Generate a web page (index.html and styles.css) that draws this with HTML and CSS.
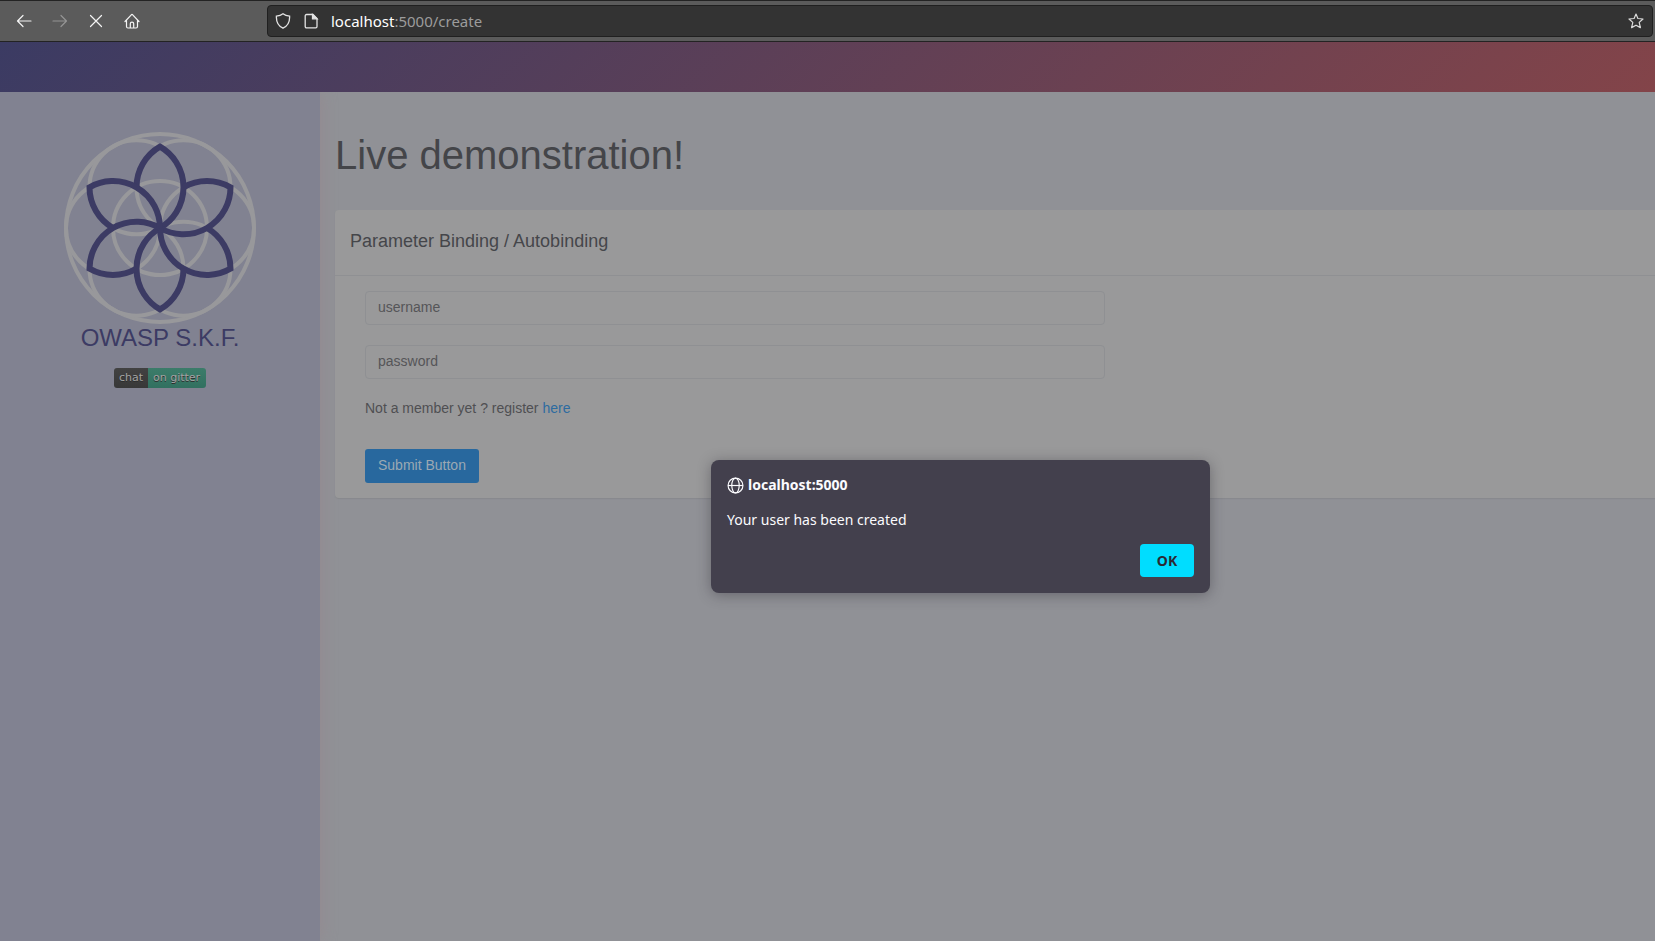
FILE: index.html
```
<!DOCTYPE html>
<html lang="en">
<head>
<meta charset="utf-8">
<title>OWASP S.K.F. - Live demonstration</title>
<link rel="stylesheet" href="styles.css">
</head>
<body>
<nav class="toolbar" aria-label="Browser">
  <div class="nav-buttons">
    <button class="tool" type="button" aria-label="Back"><svg viewBox="0 0 16 16"><path d="M15 8H1.500M7 2.500 1.500 8 7 13.500"/></svg></button>
    <button class="tool tool-off" type="button" aria-label="Forward" disabled><svg viewBox="0 0 16 16"><path d="M1 8h13.500M9 2.500 14.500 8 9 13.500"/></svg></button>
    <button class="tool" type="button" aria-label="Stop"><svg viewBox="0 0 16 16"><path d="M2.500 2.500l11 11M13.500 2.500l-11 11"/></svg></button>
    <button class="tool" type="button" aria-label="Home"><svg viewBox="0 0 16 16"><path d="M1 8.500 7.300 1.800a1 1 0 0 1 1.400 0L15 8.500M2.500 7.500v6a1.500 1.500 0 0 0 1.500 1.500h8a1.500 1.500 0 0 0 1.500-1.500v-6M6.300 15v-4.200a1.700 1.700 0 0 1 3.400 0V15"/></svg></button>
  </div>
  <div class="address">
    <svg class="icon" viewBox="0 0 16 16"><path d="M8 .8c2 1.500 4.200 2.100 6.600 2.400.3 5.600-1.800 9.700-6.600 12C3.200 12.900 1.100 8.800 1.400 3.200 3.800 2.900 6 2.300 8 .8z"/></svg>
    <svg class="icon" viewBox="0 0 16 16"><path d="M3.500 1.500h6.500l4 4v8a1.300 1.300 0 0 1-1.300 1.300H3.500a1.300 1.300 0 0 1-1.300-1.300V2.800a1.300 1.300 0 0 1 1.300-1.300z"/><path class="solid" d="M9.500 1.500v4.300h4.500z"/></svg>
    <span class="url"><span class="host">localhost</span>:5000/create</span>
    <button class="tool star" type="button" aria-label="Bookmark"><svg viewBox="0 0 16 16"><path d="M8 1l1.900 4.500 5.100.500-3.800 3.400 1.200 5.200L8 12.200l-4.400 2.400 1.200-5.200L1 6l5.100-.500z"/></svg></button>
  </div>
</nav>
<header class="banner"></header>
<div class="page">
  <aside class="sidebar">
    <svg class="logo" viewBox="-97 -97 194 194" role="img" aria-label="OWASP S.K.F. logo">
      <defs><path id="petal" d="M-23.500-40.700A47 47 0 0 1 0-81.400A47 47 0 0 1 0 0"/></defs>
      <g class="rings">
        <circle r="94"/><circle r="47"/>
        <circle cx="47" r="47"/><circle cx="-47" r="47"/>
        <circle cx="23.500" cy="-40.700" r="47"/><circle cx="-23.500" cy="-40.700" r="47"/>
        <circle cx="23.500" cy="40.700" r="47"/><circle cx="-23.500" cy="40.700" r="47"/>
      </g>
      <g class="petals">
        <use href="#petal"/><use href="#petal" transform="rotate(60)"/><use href="#petal" transform="rotate(120)"/>
        <use href="#petal" transform="rotate(180)"/><use href="#petal" transform="rotate(240)"/><use href="#petal" transform="rotate(300)"/>
      </g>
    </svg>
    <div class="brand">OWASP S.K.F.</div>
    <a class="badge" href="#gitter"><span class="badge-left">chat</span><span class="badge-right">on gitter</span></a>
  </aside>
  <main class="content">
    <h1 class="title">Live demonstration!</h1>
    <section class="card">
      <h2 class="card-title">Parameter Binding / Autobinding</h2>
      <form class="form">
        <input class="field" type="text" placeholder="username" aria-label="username">
        <input class="field" type="password" placeholder="password" aria-label="password">
        <p class="note">Not a member yet ? register <a class="link" href="#register">here</a></p>
        <button class="submit" type="submit">Submit Button</button>
      </form>
    </section>
  </main>
</div>
<div class="dialog" role="alertdialog" aria-labelledby="origin" aria-describedby="message">
  <div class="origin">
    <svg class="globe" viewBox="0 0 16 16"><circle cx="8" cy="8" r="7"/><ellipse cx="8" cy="8" rx="3.500" ry="7"/><path d="M1 8h14"/></svg>
    <span id="origin">localhost:5000</span>
  </div>
  <p class="message" id="message">Your user has been created</p>
  <button class="ok" type="button">OK</button>
</div>
</body>
</html>
```
FILE: styles.css
```
* { box-sizing: border-box; }
body {
  margin: 0;
  min-height: 100vh;
  display: flex;
  flex-direction: column;
  overflow-x: hidden;
  background: #909196;
  font: 14px/20px "Liberation Sans", Arial, sans-serif;
  color: #4f4f52;
}
svg { fill: none; stroke: currentColor; }

.toolbar {
  display: flex;
  align-items: center;
  height: 42px;
  padding: 0 2px 0 14px;
  background: #5b5b5b;
  border-top: 1px solid #232323;
  border-bottom: 1px solid #232323;
  font-family: "Noto Sans", sans-serif;
}
.nav-buttons { display: flex; gap: 16px; width: 253px; }
.tool {
  display: flex;
  padding: 2px;
  border: 0;
  background: none;
  color: #f4f4f4;
}
.tool svg { width: 16px; height: 16px; stroke-width: 1.2; stroke-linecap: round; stroke-linejoin: round; }
.tool-off { color: #949494; }
.address {
  flex: 1;
  display: flex;
  align-items: center;
  gap: 12px;
  height: 32px;
  padding: 0 6px 0 7px;
  background: #333;
  border: 1px solid #202020;
  border-radius: 4px;
  color: #e4e4e4;
}
.icon { width: 16px; height: 16px; stroke-width: 1.3; }
.url { flex: 1; font-size: 15px; color: #9c9c9c; }
.solid { fill: currentColor; }
.host { color: #fff; }
.star { color: #dcdcdc; }

.banner {
  position: relative;
  z-index: 1;
  height: 50px;
  background: linear-gradient(135deg, #3b3b63, #834449);
}
.page { flex: 1; display: flex; }

.sidebar {
  flex: 0 0 320px;
  display: flex;
  flex-direction: column;
  align-items: center;
  padding-top: 39px;
  background: #818291;
  box-shadow: 0 0 16px #94898f;
}
.logo { width: 194px; height: 194px; }
.rings { stroke: #98989b; stroke-width: 4; }
.petals { stroke: #3c3b64; stroke-width: 6; }
.brand { font-size: 24px; line-height: 26px; color: #3c3b64; }
.badge {
  display: flex;
  margin-top: 17px;
  border-radius: 3px;
  overflow: hidden;
  font: 11px/20px "DejaVu Sans", sans-serif;
  color: #a3a3a3;
  text-decoration: none;
  text-shadow: 0 1px 0 #2c2c2c;
}
.badge-left { padding: 0 5px; background: linear-gradient(#424242, #383838); }
.badge-right { padding: 0 6px 0 5px; background: linear-gradient(#3c7c6a, #327060); }

.content { flex: 1; min-width: 0; padding: 39px 0 0 15px; }
.title { margin: 0; font-size: 40px; font-weight: 400; line-height: 48px; color: #444549; }
.card {
  margin-top: 31px;
  background: #99999a;
  border-radius: 4px 0 0 4px;
  box-shadow: 0 1px 1px #88898d;
}
.card-title {
  margin: 0;
  padding: 20px 15px 23px;
  border-bottom: 1px solid #8f9093;
  font-size: 18px;
  font-weight: 400;
  line-height: 22px;
  color: #45464a;
}
.form { padding: 15px 30px; }
.field {
  display: block;
  width: 100%;
  max-width: 740px;
  height: 34px;
  margin-bottom: 20px;
  padding: 0 12px 2px;
  border: 1px solid #8f9093;
  border-radius: 4px;
  background: transparent;
  font: inherit;
}
.field::placeholder { color: #555558; opacity: 1; }
.note { margin: 0 0 32px; line-height: 18px; }
.link { color: #2d6ba0; text-decoration: none; }
.submit {
  display: block;
  height: 34px;
  padding: 0 13px 2px;
  border: 0;
  border-radius: 3px;
  background: #28689e;
  color: #9ba8b3;
  font: inherit;
}

.dialog {
  position: absolute;
  z-index: 2;
  top: 460px;
  left: 711px;
  width: 499px;
  display: flex;
  flex-direction: column;
  padding: 16px;
  border-radius: 8px;
  background: #43404d;
  box-shadow: 0 2px 14px rgba(40, 38, 48, 0.4);
  font: 14px/18px "Noto Sans", sans-serif;
  color: #fbfbfe;
}
.origin { display: flex; align-items: center; gap: 4px; font-weight: 700; }
.globe { width: 17px; height: 17px; stroke-width: 1.1; }
.message { margin: 17px 0 15px; }
.ok {
  align-self: flex-end;
  width: 54px;
  height: 33px;
  border: 0;
  border-radius: 4px;
  background: #00ddff;
  color: #2b2a33;
  font: inherit;
  font-weight: 700;
}
```
